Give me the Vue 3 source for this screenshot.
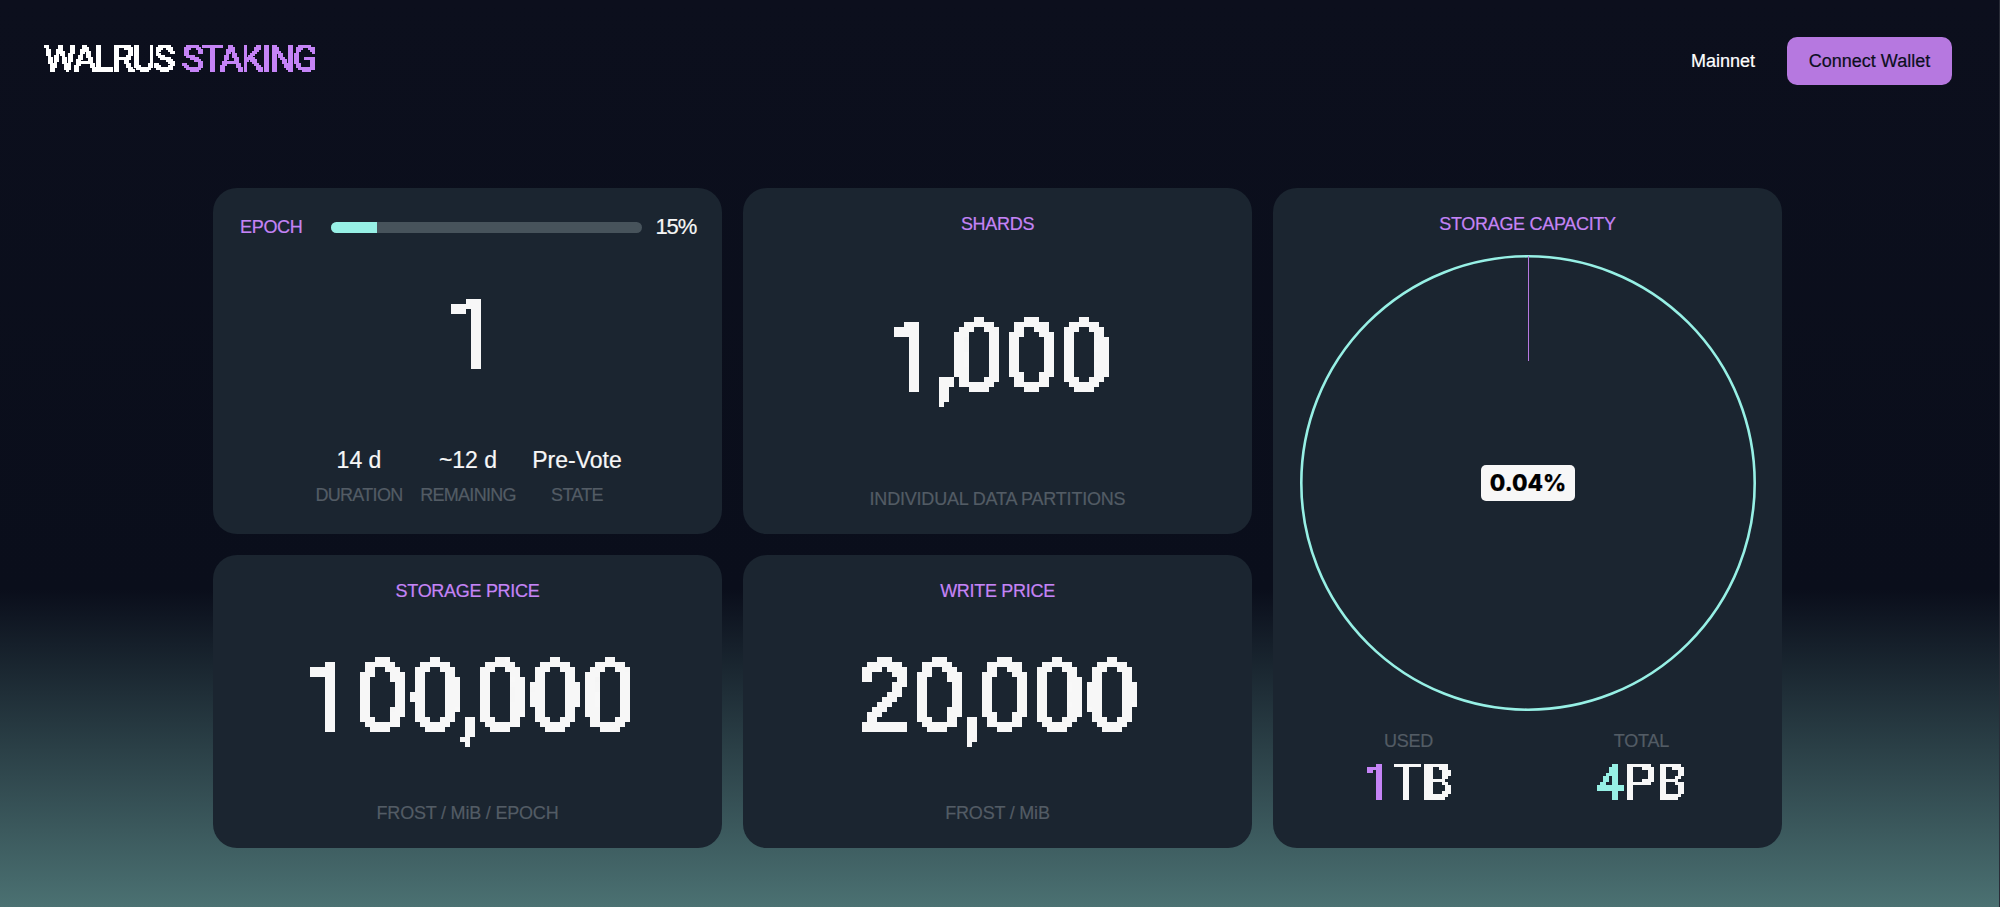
<template>
  <div class="page">
    <!-- pixel look for the display font, the text stays real text -->
    <svg class="defs" aria-hidden="true">
      <filter v-for="f in pixelFilters" :id="f.id" :key="f.id" x="0" y="0" width="100%" height="100%" color-interpolation-filters="sRGB">
        <feFlood :x="f.radius" :y="f.radius" width="1" height="1" />
        <feComposite :width="f.size" :height="f.size" />
        <feTile result="grid" />
        <feComposite in="SourceGraphic" in2="grid" operator="in" />
        <feComponentTransfer>
          <feFuncA type="discrete" tableValues="0 1" />
        </feComponentTransfer>
        <feMorphology operator="dilate" :radius="f.radius" />
      </filter>
    </svg>

    <header class="topbar">
      <div class="logo pixel-sm">WALRUS <span class="purple">STAKING</span></div>
      <div class="topbar-right">
        <span class="network">Mainnet</span>
        <button class="connect">Connect Wallet</button>
      </div>
    </header>

    <main class="grid">
      <section class="card epoch">
        <div class="epoch-head">
          <span class="title">EPOCH</span>
          <div class="bar"><div class="bar-fill" :style="{ width: progress + '%' }"></div></div>
          <span class="percent">{{ progress }}%</span>
        </div>
        <div class="big epoch-num pixel-lg">1</div>
        <div class="stats">
          <div v-for="s in epochStats" :key="s.label" class="stat">
            <div class="stat-value">{{ s.value }}</div>
            <div class="sub stat-label">{{ s.label }}</div>
          </div>
        </div>
      </section>

      <section class="card metric">
        <div class="title">SHARDS</div>
        <div class="big pixel-lg">1<span class="comma">,</span>000</div>
        <div class="sub">INDIVIDUAL DATA PARTITIONS</div>
      </section>

      <section class="card capacity">
        <div class="title">STORAGE CAPACITY</div>
        <div class="pie">
          <svg viewBox="0 0 456 456" class="pie-svg">
            <circle cx="228" cy="228" r="226.7" class="ring" />
            <line x1="228.5" y1="1" x2="228.5" y2="106" class="used-line" />
          </svg>
          <div class="pie-badge">0.04%</div>
        </div>
        <div class="totals">
          <div class="total">
            <div class="sub">USED</div>
            <div class="total-value pixel-md"><span class="purple">1</span>TB</div>
          </div>
          <div class="total">
            <div class="sub">TOTAL</div>
            <div class="total-value pixel-md"><span class="mint">4</span>PB</div>
          </div>
        </div>
      </section>

      <section class="card metric">
        <div class="title">STORAGE PRICE</div>
        <div class="big pixel-lg">100<span class="comma">,</span>000</div>
        <div class="sub">FROST / MiB / EPOCH</div>
      </section>

      <section class="card metric">
        <div class="title">WRITE PRICE</div>
        <div class="big pixel-lg">20<span class="comma">,</span>000</div>
        <div class="sub">FROST / MiB</div>
      </section>
    </main>
  </div>
</template>

<script setup>
const progress = 15

const epochStats = [
  { value: '14 d', label: 'DURATION' },
  { value: '~12 d', label: 'REMAINING' },
  { value: 'Pre-Vote', label: 'STATE' }
]

const pixelFilters = [
  { id: 'pixel-lg', size: 5, radius: 2 },
  { id: 'pixel-md', size: 3, radius: 1 },
  { id: 'pixel-sm', size: 2, radius: 1 }
]
</script>

<style>
html,
body {
  margin: 0;
  background: #0c0f1d;
}
</style>

<style scoped>
.page {
  height: 907px;
  overflow: hidden;
  box-sizing: border-box;
  border-right: 1px solid #2a2d38;
  font-family: "Liberation Sans", Arial, sans-serif;
  -webkit-text-stroke: 0.2px;
  color: #f7f7f7;
  background: linear-gradient(180deg, #0c0f1d 0%, #0a0e1b 65%, #4b7172 100%);
}

.defs {
  position: absolute;
  width: 0;
  height: 0;
}

.pixel-lg { filter: url(#pixel-lg); }
.pixel-md { filter: url(#pixel-md); }
.pixel-sm { filter: url(#pixel-sm); }

.purple { color: #c584f6; }
.mint { color: #97f0e5; }

.topbar {
  display: flex;
  align-items: center;
  justify-content: space-between;
  height: 122px;
  padding: 0 47px 0 44px;
}

.logo {
  font-family: Roboto, sans-serif;
  font-size: 36px;
  letter-spacing: -2px;
  word-spacing: 2px;
  line-height: 40px;
  margin-top: -5px;
  color: #fff;
}

.topbar-right {
  display: flex;
  align-items: center;
  gap: 32px;
}

.network {
  font-size: 18px;
  color: #fff;
}

.connect {
  width: 165px;
  height: 48px;
  border: 0;
  border-radius: 10px;
  background: #b678e0;
  color: #0c0f1d;
  font-family: inherit;
  font-size: 18px;
}

.grid {
  display: grid;
  grid-template-columns: repeat(3, 509px);
  grid-template-rows: 346px 293px;
  gap: 21px;
  width: 1569px;
  margin: 66px 0 0 213px;
}

.card {
  background: #1b2530;
  border-radius: 24px;
  box-sizing: border-box;
  text-align: center;
}

.title {
  font-size: 18px;
  line-height: 22px;
  letter-spacing: -0.3px;
  color: #c584f6;
}

.sub {
  font-size: 18px;
  line-height: 22px;
  letter-spacing: -0.2px;
  color: #535c65;
}

.stat-label {
  letter-spacing: -0.7px;
}

.big {
  font-family: Roboto, sans-serif;
  font-size: 98px;
  font-weight: 500;
  line-height: 100px;
  letter-spacing: -2px;
  color: #f7f7f7;
}

.comma {
  margin-left: -3px;
  letter-spacing: -7px;
}

.metric {
  display: flex;
  flex-direction: column;
  justify-content: space-between;
  align-items: center;
  padding: 25px 0 24px;
}

.metric .big {
  margin-bottom: 10px;
}

.epoch {
  padding: 26px 26px 0 27px;
}

.epoch-head {
  display: flex;
  align-items: center;
  height: 26px;
}

.bar {
  flex: 1;
  height: 11px;
  margin: 0 14px 0 28px;
  background: #47535b;
  border-radius: 6px;
  overflow: hidden;
}

.bar-fill {
  height: 100%;
  background: #97f0e5;
}

.percent {
  font-size: 22px;
  letter-spacing: -1.2px;
}

.epoch-num {
  margin: 44px 0 0 6px;
}

.stats {
  display: grid;
  grid-template-columns: repeat(3, 97px);
  justify-content: center;
  gap: 12px;
  margin-top: 61px;
}

.stat-value {
  font-size: 23px;
  line-height: 30px;
  margin-bottom: 9px;
  white-space: nowrap;
}

.capacity {
  grid-row: 1 / span 2;
  grid-column: 3;
  display: flex;
  flex-direction: column;
  align-items: center;
  padding-top: 25px;
}

.pie {
  position: relative;
  width: 456px;
  height: 456px;
  margin: 20px 0 0 1px;
}

.pie-svg {
  display: block;
  width: 100%;
  height: 100%;
}

.ring {
  fill: none;
  stroke: #97f0e5;
  stroke-width: 2.6;
}

.used-line {
  stroke: #b678e0;
  stroke-width: 1;
}

.pie-badge {
  position: absolute;
  left: 50%;
  top: 50%;
  transform: translate(-50%, -50%);
  width: 94px;
  height: 36px;
  line-height: 36px;
  border-radius: 5px;
  background: #f7f7f7;
  color: #000;
  font-family: Inter, sans-serif;
  font-weight: 800;
  font-size: 22.5px;
}

.totals {
  display: grid;
  grid-template-columns: repeat(2, 233px);
  margin: 19px 5px 0 0;
}

.total-value {
  font-family: Roboto, sans-serif;
  font-size: 50px;
  font-weight: 500;
  line-height: 48px;
  letter-spacing: -0.6px;
  margin-top: 6px;
  color: #f7f7f7;
}
</style>
